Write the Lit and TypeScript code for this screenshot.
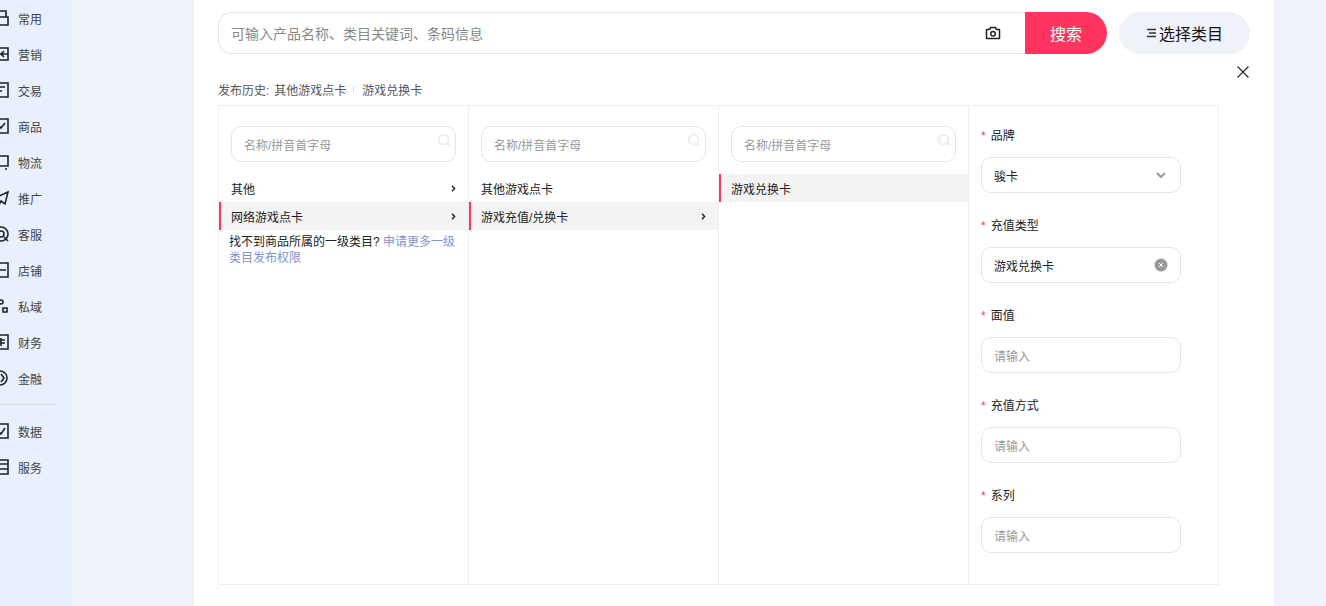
import { LitElement, html, css, svg } from 'lit';
import { customElement } from 'lit/decorators.js';

const navIcons: Record<string, unknown> = {
  常用: svg`<path d="M4 2h10v6H4zM2 8h14v8H2z"/>`,
  营销: svg`<path d="M2 3h14v12H2zM8 9h8M12 6l-3 3 3 3"/>`,
  交易: svg`<path d="M2 2h14v14H2zM6 6h7M6 10h4"/>`,
  商品: svg`<path d="M2 2h14v14H2zM7 9l2 2 4-5"/>`,
  物流: svg`<path d="M2 3h14v10H2zM5 16h2M13 16h2"/>`,
  推广: svg`<path d="M3 9l13-6-3 12-4-3-2 4-1-5z"/>`,
  客服: svg`<circle cx="9" cy="9" r="7"/><circle cx="9" cy="9" r="3"/><path d="M12 12l4 4"/>`,
  店铺: svg`<path d="M2 2h14v14H2zM8 9h6"/>`,
  私域: svg`<circle cx="9" cy="5" r="2"/><path d="M3 15v-4h4v4zM11 15v-4h4v4z"/>`,
  财务: svg`<path d="M2 2h14v14H2zM9 5v8M6 7h7M6 10h7"/>`,
  金融: svg`<circle cx="8" cy="9" r="7"/><path d="M9 5l3 4-3 4"/>`,
  数据: svg`<path d="M2 2h14v14H2zM7 10l2 2 4-6"/>`,
  服务: svg`<path d="M2 2h14v14H2zM7 6h9M7 11h9"/>`,
};

const upperNav = ['常用', '营销', '交易', '商品', '物流', '推广', '客服', '店铺', '私域', '财务', '金融'];
const lowerNav = ['数据', '服务'];

const searchIcon = html`<svg class="find" viewBox="0 0 14 14">
  <circle cx="6.5" cy="6.5" r="5"/><path d="M10 10l2.5 2.5"/>
</svg>`;

@customElement('app-root')
export class AppRoot extends LitElement {
  static styles = css`
    :host {
      display: block;
      height: 606px;
      overflow: hidden;
      font-family: "Liberation Sans", "Noto Sans CJK SC", sans-serif;
      font-size: 12px;
      color: #222;
    }

    .page {
      display: flex;
      height: 606px;
      background: #eff2fa;
    }

    .sidebar {
      flex: none;
      width: 71px;
      background: #e8effd;
      overflow: hidden;
    }

    .nav-item {
      display: flex;
      align-items: center;
      gap: 8px;
      height: 36px;
      margin-left: -8px;
      color: #444;
    }

    .nav-item svg {
      flex: none;
      width: 18px;
      height: 18px;
      fill: none;
      stroke: #222;
      stroke-width: 1.6;
    }

    .nav-list {
      padding-top: 0;
    }

    .nav-rule {
      width: 56px;
      height: 1px;
      margin: 8px 0 8px;
      background: #d9dde6;
    }

    .panel {
      flex: none;
      width: 1080px;
      margin-left: 123px;
      padding: 12px 24px 0;
      box-sizing: border-box;
      background: #fff;
    }

    .top {
      display: flex;
      gap: 12px;
    }

    .search {
      display: flex;
      align-items: center;
      width: 889px;
      height: 42px;
      box-sizing: border-box;
      border: 1px solid #e5e6eb;
      border-right: none;
      border-radius: 14px 21px 21px 14px;
      font-size: 14px;
      color: #888;
    }

    .search-text {
      flex: 1;
      padding-left: 12px;
    }

    .camera {
      width: 18px;
      height: 18px;
      margin-right: 23px;
      fill: none;
      stroke: #222;
      stroke-width: 1.5;
    }

    .search-btn {
      display: flex;
      align-items: center;
      justify-content: center;
      width: 82px;
      height: 42px;
      margin: -1px 0;
      background: #ff3560;
      color: #fff;
      font-size: 16px;
      border-radius: 0 21px 21px 0;
    }

    .pick {
      display: flex;
      align-items: center;
      justify-content: center;
      gap: 2px;
      width: 131px;
      height: 42px;
      border-radius: 21px;
      background: #eff2f9;
      color: #111;
      font-size: 16px;
    }

    .pick svg {
      width: 11px;
      height: 10px;
      fill: none;
      stroke: #333;
      stroke-width: 1.3;
    }

    .close-row {
      display: flex;
      justify-content: flex-end;
      height: 12px;
      margin-top: 12px;
      padding-right: 1px;
    }

    .close-row svg {
      width: 12px;
      height: 12px;
      fill: none;
      stroke: #222;
      stroke-width: 1.1;
    }

    .history {
      display: flex;
      align-items: center;
      height: 18px;
      margin-top: 2px;
      color: #555;
    }

    .history .gap {
      width: 5px;
    }

    .history .sep {
      width: 1px;
      height: 6px;
      margin: 0 8px 0 7px;
      background: #ddd;
    }

    .picker {
      display: flex;
      width: 1001px;
      height: 480px;
      margin-top: 7px;
      box-sizing: border-box;
      border: 1px solid #eee;
    }

    .col {
      flex: none;
      width: 250px;
      box-sizing: border-box;
      border-right: 1px solid #eee;
    }

    .col:last-child {
      width: 249px;
      padding: 20px 12px 0;
      border-right: none;
    }

    .filter {
      display: flex;
      align-items: center;
      justify-content: space-between;
      height: 36px;
      margin: 20px 12px 12px;
      box-sizing: border-box;
      padding: 0 4px 8px 12px;
      border: 1px solid #e5e6eb;
      border-radius: 10px;
      color: #999;
    }

    .filter span {
      margin-top: 8px;
    }

    .find {
      width: 14px;
      height: 14px;
      fill: none;
      stroke: #eeeeee;
      stroke-width: 2;
    }

    .row {
      display: flex;
      align-items: center;
      justify-content: space-between;
      height: 28px;
      box-sizing: border-box;
      padding: 0 12px;
      color: #222;
    }

    .row.on {
      padding-left: 10px;
      border-left: 2px solid #ff3560;
      background: #f3f3f3;
    }

    .row svg {
      width: 5px;
      height: 7px;
      fill: none;
      stroke: #222;
      stroke-width: 1.4;
    }

    .note {
      margin: 4px 10px 0;
      line-height: 16px;
      color: #222;
    }

    .note em {
      font-style: normal;
      color: #7d93d4;
    }

    .field {
      height: 90px;
    }

    .label {
      display: flex;
      gap: 5px;
      height: 20px;
      margin-bottom: 11px;
      line-height: 20px;
      color: #222;
    }

    .label i {
      font-style: normal;
      color: #ff3560;
    }

    .box {
      display: flex;
      align-items: center;
      justify-content: space-between;
      width: 200px;
      height: 36px;
      box-sizing: border-box;
      padding: 0 12px;
      border: 1px solid #e5e6eb;
      border-radius: 10px;
      color: #222;
    }

    .box.empty {
      color: #999;
    }

    .box svg {
      width: 14px;
      height: 14px;
    }

    .chev {
      fill: none;
      stroke: #999;
      stroke-width: 2;
    }

    .clear circle {
      fill: #999;
    }

    .clear path {
      fill: none;
      stroke: #fff;
      stroke-width: 1;
    }
  `;

  private navItem(name: string) {
    return html`<div class="nav-item">
      <svg viewBox="0 0 18 18">${navIcons[name]}</svg>
      <span>${name}</span>
    </div>`;
  }

  private filter() {
    return html`<div class="filter"><span>名称/拼音首字母</span>${searchIcon}</div>`;
  }

  private row(text: string, on = false, arrow = true) {
    return html`<div class="row ${on ? 'on' : ''}">
      <span>${text}</span>
      ${arrow ? html`<svg viewBox="0 0 5 7"><path d="M1 .8L3.6 3.5 1 6.2"/></svg>` : ''}
    </div>`;
  }

  private field(label: string, value: string, kind: 'select' | 'clear' | 'empty') {
    return html`<div class="field">
      <div class="label"><i>*</i><span>${label}</span></div>
      <div class="box ${kind === 'empty' ? 'empty' : ''}">
        <span>${value}</span>
        ${kind === 'select'
          ? html`<svg class="chev" viewBox="0 0 14 14"><path d="M3 5l4 4 4-4"/></svg>`
          : ''}
        ${kind === 'clear'
          ? html`<svg class="clear" viewBox="0 0 14 14">
              <circle cx="7" cy="7" r="6.5"/><path d="M5 5l4 4M9 5l-4 4"/>
            </svg>`
          : ''}
      </div>
    </div>`;
  }

  render() {
    return html`
      <div class="page">
        <aside class="sidebar">
          <div class="nav-list">${upperNav.map((n) => this.navItem(n))}</div>
          <div class="nav-rule"></div>
          <div class="nav-list">${lowerNav.map((n) => this.navItem(n))}</div>
        </aside>
        <main class="panel">
          <div class="top">
            <div class="search">
              <span class="search-text">可输入产品名称、类目关键词、条码信息</span>
              <svg class="camera" viewBox="0 0 18 18">
                <path d="M2.5 5.5h3l1.2-2h4.6l1.2 2h3v9h-13z" stroke-linejoin="round"/>
                <circle cx="9" cy="9.8" r="2.3"/>
              </svg>
              <div class="search-btn">搜索</div>
            </div>
            <div class="pick">
              <svg viewBox="0 0 11 10"><path d="M1 1.5h9M3 5h7M1 8.5h9"/></svg>
              <span>选择类目</span>
            </div>
          </div>
          <div class="close-row">
            <svg viewBox="0 0 12 12"><path d="M.5.5l11 11M11.500.5l-11 11"/></svg>
          </div>
          <div class="history">
            <span>发布历史:</span><span class="gap"></span><span>其他游戏点卡</span>
            <span class="sep"></span><span>游戏兑换卡</span>
          </div>
          <div class="picker">
            <div class="col">
              ${this.filter()}
              ${this.row('其他')}
              ${this.row('网络游戏点卡', true)}
              <div class="note">找不到商品所属的一级类目? <em>申请更多一级类目发布权限</em></div>
            </div>
            <div class="col">
              ${this.filter()}
              ${this.row('其他游戏点卡', false, false)}
              ${this.row('游戏充值/兑换卡', true)}
            </div>
            <div class="col">
              ${this.filter()}
              ${this.row('游戏兑换卡', true, false)}
            </div>
            <div class="col">
              ${this.field('品牌', '骏卡', 'select')}
              ${this.field('充值类型', '游戏兑换卡', 'clear')}
              ${this.field('面值', '请输入', 'empty')}
              ${this.field('充值方式', '请输入', 'empty')}
              ${this.field('系列', '请输入', 'empty')}
            </div>
          </div>
        </main>
      </div>
    `;
  }
}
